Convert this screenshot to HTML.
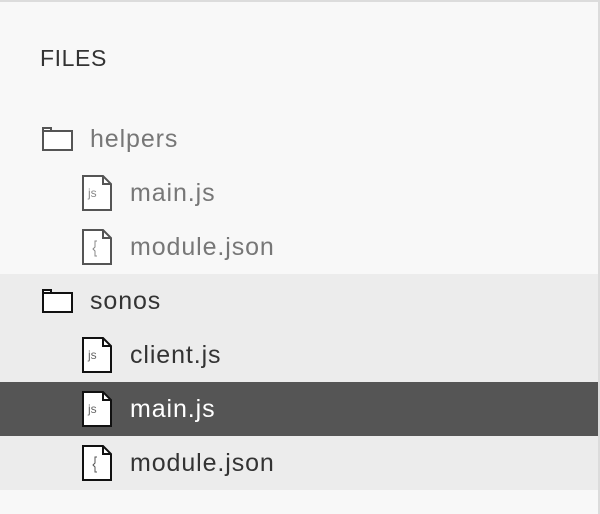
<!DOCTYPE html>
<html><head><style>
html,body{margin:0;padding:0}
body{width:600px;height:514px;background:#f8f8f8;font-family:"Liberation Sans",sans-serif;position:relative;overflow:hidden}
.top{position:absolute;left:0;top:0;width:600px;height:2px;background:#dcdcdc}
.right{position:absolute;right:0;top:0;width:2px;height:514px;background:#dcdcdc}
.h{position:absolute;left:40px;top:45px;font-size:23px;letter-spacing:0.6px;color:#333}
.row{position:absolute;left:0;width:598px;height:54px}
.row span{position:absolute;top:50%;transform:translateY(-48%);font-size:25px;letter-spacing:0.9px;white-space:nowrap}
.row svg{position:absolute}
</style></head><body>
<div class="top"></div><div class="right"></div>
<div class="h">FILES</div>

<div class="row" style="top:112px">
<svg style="left:42px;top:15px" width="31" height="24" viewBox="0 0 31 24"><path d="M1 1H9V4H30V23H1Z" fill="#fff" stroke="#555" stroke-width="2"/><path d="M1 4H9" stroke="#555" stroke-width="2"/></svg>
<span style="left:90px;color:#777">helpers</span></div>

<div class="row" style="top:166px">
<svg style="left:82px;top:9px" width="30" height="36" viewBox="0 0 30 36"><path d="M1 1H21L29 9V35H1Z" fill="#fff" stroke="#555" stroke-width="2"/><path d="M21 1V9H29" fill="none" stroke="#555" stroke-width="2"/><text x="6" y="22" font-size="12" fill="#888" font-family="Liberation Sans">js</text></svg>
<span style="left:130px;color:#777">main.js</span></div>

<div class="row" style="top:220px">
<svg style="left:82px;top:9px" width="30" height="36" viewBox="0 0 30 36"><path d="M1 1H21L29 9V35H1Z" fill="#fff" stroke="#555" stroke-width="2"/><path d="M21 1V9H29" fill="none" stroke="#555" stroke-width="2"/><path d="M15 12H13V18L11 20L13 22V27H15" fill="none" stroke="#888" stroke-width="1"/></svg>
<span style="left:130px;color:#777">module.json</span></div>

<div class="row" style="top:274px;background:#ececec">
<svg style="left:42px;top:15px" width="31" height="24" viewBox="0 0 31 24"><path d="M1 1H9V4H30V23H1Z" fill="#fff" stroke="#111" stroke-width="2"/><path d="M1 4H9" stroke="#111" stroke-width="2"/></svg>
<span style="left:90px;color:#333">sonos</span></div>

<div class="row" style="top:328px;background:#ececec">
<svg style="left:82px;top:9px" width="30" height="36" viewBox="0 0 30 36"><path d="M1 1H21L29 9V35H1Z" fill="#fff" stroke="#111" stroke-width="2"/><path d="M21 1V9H29" fill="none" stroke="#111" stroke-width="2"/><text x="6" y="22" font-size="12" fill="#666" font-family="Liberation Sans">js</text></svg>
<span style="left:130px;color:#333">client.js</span></div>

<div class="row" style="top:382px;background:#555">
<svg style="left:82px;top:9px" width="30" height="36" viewBox="0 0 30 36"><path d="M1 1H21L29 9V35H1Z" fill="#fff" stroke="#111" stroke-width="2"/><path d="M21 1V9H29" fill="none" stroke="#111" stroke-width="2"/><text x="6" y="22" font-size="12" fill="#666" font-family="Liberation Sans">js</text></svg>
<span style="left:130px;color:#fff">main.js</span></div>

<div class="row" style="top:436px;background:#ececec">
<svg style="left:82px;top:9px" width="30" height="36" viewBox="0 0 30 36"><path d="M1 1H21L29 9V35H1Z" fill="#fff" stroke="#111" stroke-width="2"/><path d="M21 1V9H29" fill="none" stroke="#111" stroke-width="2"/><path d="M15 12H13V18L11 20L13 22V27H15" fill="none" stroke="#555" stroke-width="1"/></svg>
<span style="left:130px;color:#333">module.json</span></div>
</body></html>
